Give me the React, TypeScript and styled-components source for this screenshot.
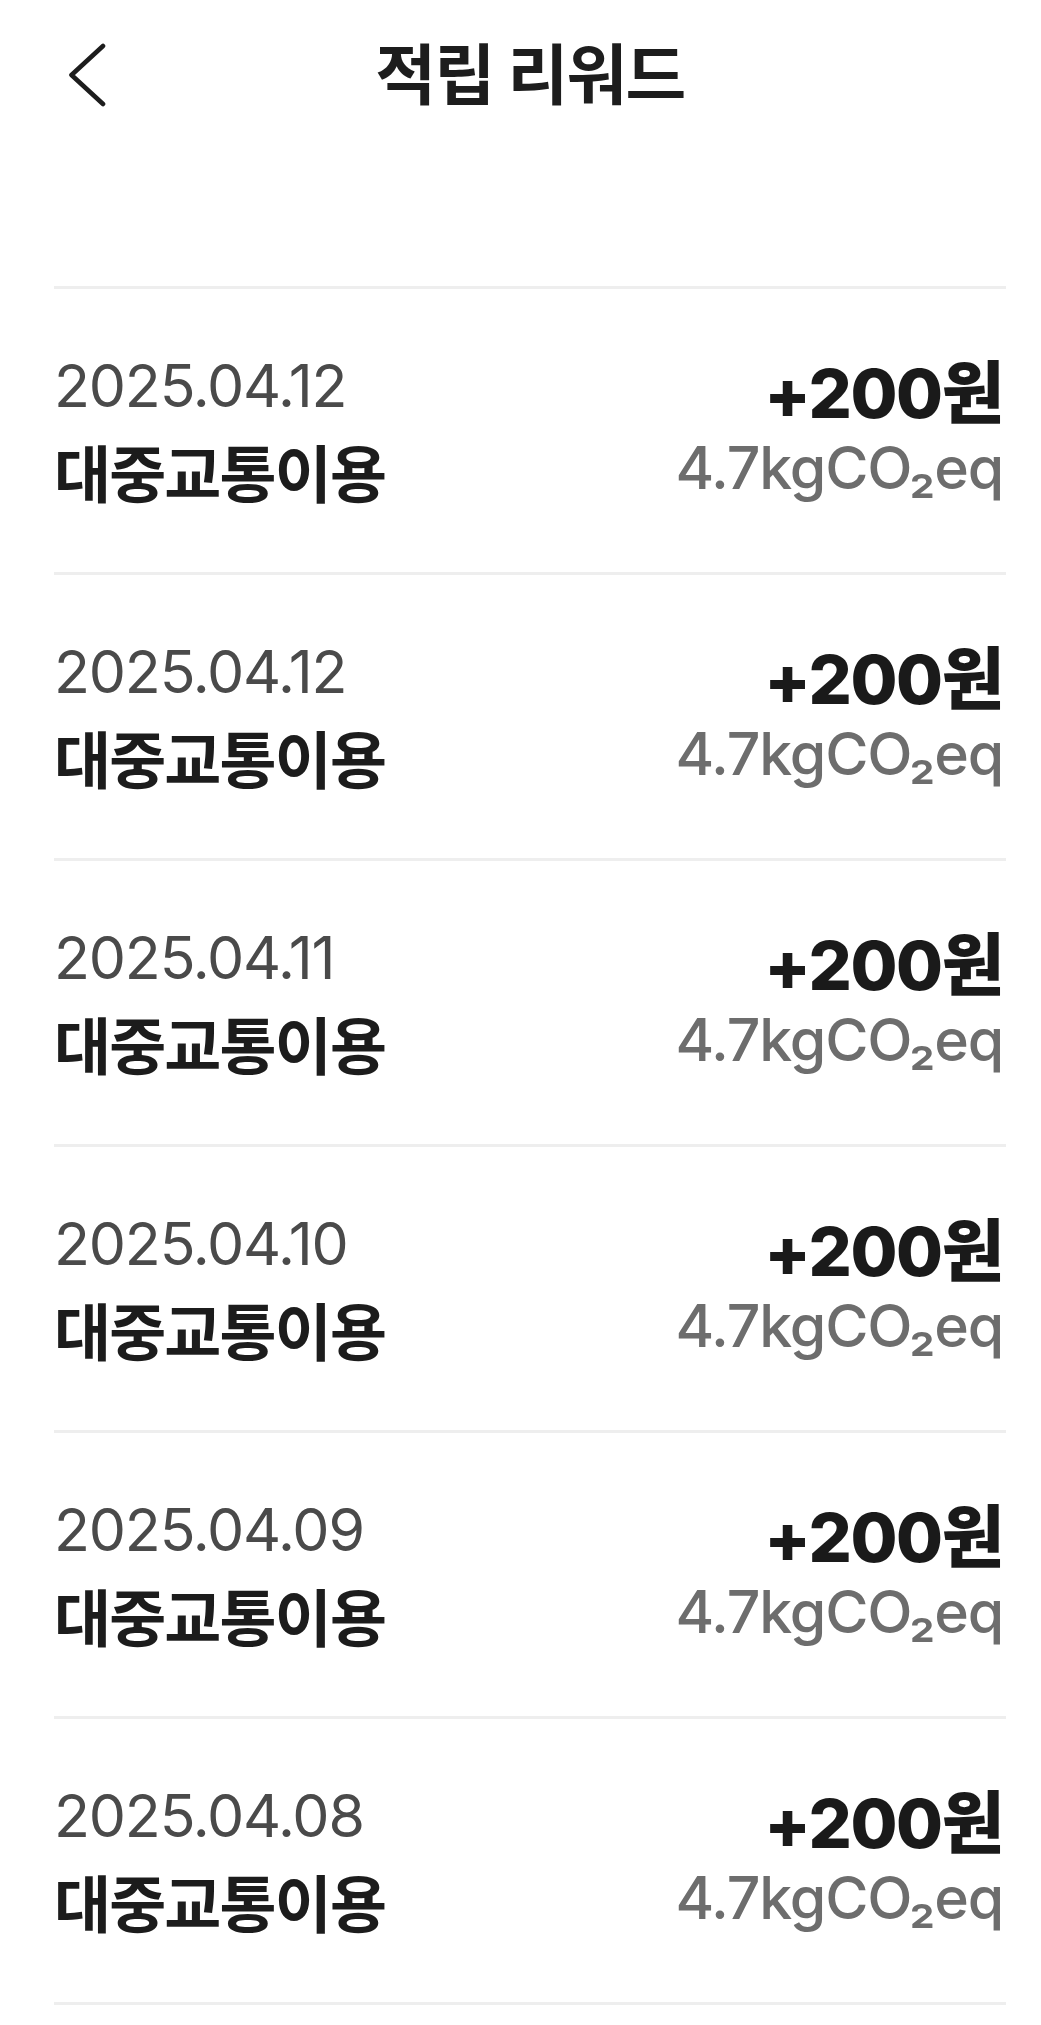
import React from 'react';
import styled, { createGlobalStyle } from 'styled-components';

const GlobalStyle = createGlobalStyle`
  * {
    box-sizing: border-box;
  }

  body {
    margin: 0;
    background: #ffffff;
    font-family: Inter, 'Noto Sans CJK KR', sans-serif;
    -webkit-font-smoothing: antialiased;
  }
`;

type Reward = {
  date: string;
  title: string;
  amount: number;
  co2: string;
};

const rewards: Reward[] = [
  { date: '2025.04.12', title: '대중교통이용', amount: 200, co2: '4.7' },
  { date: '2025.04.12', title: '대중교통이용', amount: 200, co2: '4.7' },
  { date: '2025.04.11', title: '대중교통이용', amount: 200, co2: '4.7' },
  { date: '2025.04.10', title: '대중교통이용', amount: 200, co2: '4.7' },
  { date: '2025.04.09', title: '대중교통이용', amount: 200, co2: '4.7' },
  { date: '2025.04.08', title: '대중교통이용', amount: 200, co2: '4.7' },
];

const BackIcon: React.FC = () => (
  <svg width="40" height="64" viewBox="0 0 40 64" fill="none">
    <path
      d="M37 3 L5.5 32 L37 61"
      stroke="#1d1d1d"
      strokeWidth="4.6"
      strokeLinecap="round"
      strokeLinejoin="round"
    />
  </svg>
);

const App: React.FC = () => {
  return (
    <Page>
      <GlobalStyle />
      <Header>
        <BackButton type="button" aria-label="뒤로">
          <BackIcon />
        </BackButton>
        <Title>적립 리워드</Title>
        <span />
      </Header>

      <List>
        {rewards.map((item, i) => (
          <Row key={i}>
            <Left>
              <DateText>{item.date}</DateText>
              <Name>{item.title}</Name>
            </Left>
            <Right>
              <Amount>+{item.amount}원</Amount>
              <Carbon>{item.co2}kgCO₂eq</Carbon>
            </Right>
          </Row>
        ))}
      </List>
    </Page>
  );
};

export default App;

const Page = styled.div`
  width: 1041px;
  min-height: 2025px;
  padding: 0 35px 0 54px;
  background: #ffffff;
`;

const Header = styled.header`
  height: 150px;
  display: grid;
  grid-template-columns: 1fr auto 1fr;
  align-items: center;
`;

const BackButton = styled.button`
  justify-self: start;
  display: flex;
  align-items: center;
  margin: 0 0 0 12px;
  padding: 0;
  border: 0;
  background: none;
  cursor: pointer;
`;

const Title = styled.h1`
  margin: 0;
  font-size: 66px;
  font-weight: 700;
  letter-spacing: -0.025em;
  color: #1d1d1d;
  line-height: 1;
`;

const List = styled.ul`
  margin: 136px 0 0;
  padding: 0;
  list-style: none;
  border-top: 3px solid #eeeeee;
`;

const Row = styled.li`
  height: 286px;
  display: flex;
  justify-content: space-between;
  align-items: center;
  border-bottom: 3px solid #eeeeee;
`;

const Left = styled.div`
  display: flex;
  flex-direction: column;
  gap: 24px;
`;

const Right = styled.div`
  display: flex;
  flex-direction: column;
  align-items: flex-end;
  gap: 9px;
  padding-right: 3px;
`;

const DateText = styled.div`
  font-size: 59px;
  line-height: 66px;
  font-weight: 400;
  letter-spacing: -0.02em;
  color: #4a4a4a;
`;

const Name = styled.div`
  font-size: 62px;
  line-height: 66px;
  font-weight: 700;
  letter-spacing: -0.03em;
  color: #1c1c1c;
`;

const Amount = styled.div`
  font-size: 68px;
  line-height: 66px;
  font-weight: 800;
  letter-spacing: -0.02em;
  color: #1a1a1a;
`;

const Carbon = styled.div`
  font-size: 59px;
  line-height: 66px;
  font-weight: 500;
  letter-spacing: -0.02em;
  color: #6d6d6d;
`;
